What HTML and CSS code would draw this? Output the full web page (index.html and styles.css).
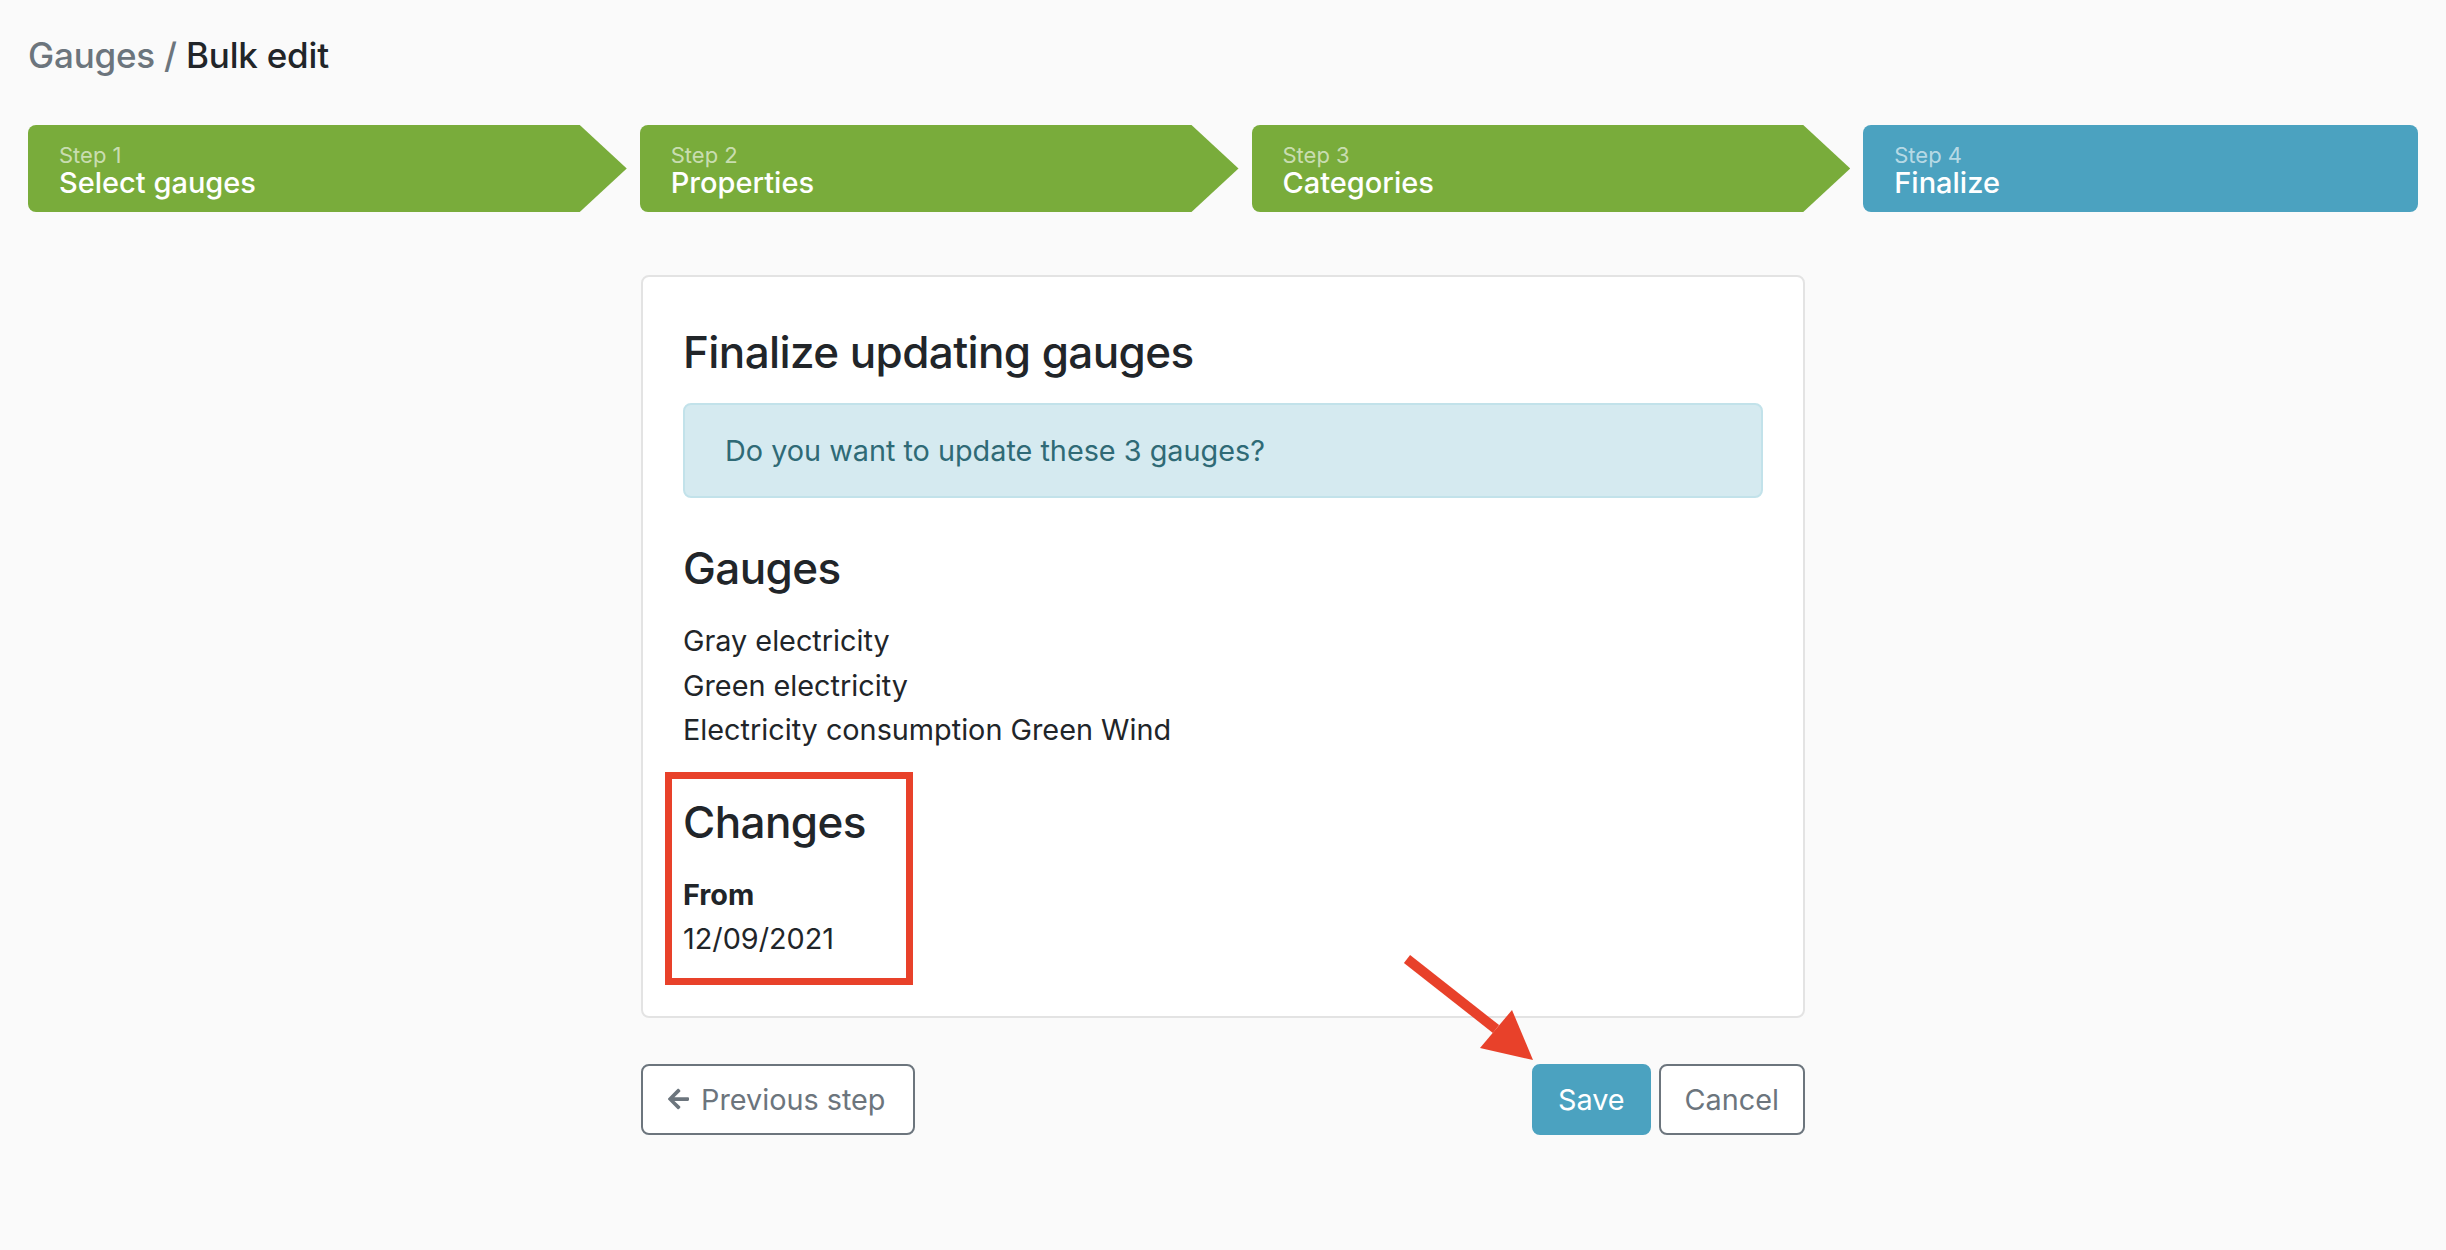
FILE: index.html
```html
<!DOCTYPE html>
<html lang="en">
<head>
<meta charset="utf-8">
<title>Gauges / Bulk edit</title>
<link rel="stylesheet" href="styles.css">
</head>
<body>
<div class="page">
  <h1 class="title"><span class="crumb">Gauges /</span> Bulk edit</h1>

  <div class="steps">
    <div class="step step-done step-arrow">
      <span class="step-num">Step 1</span>
      <span class="step-label">Select gauges</span>
    </div>
    <div class="step step-done step-arrow">
      <span class="step-num">Step 2</span>
      <span class="step-label">Properties</span>
    </div>
    <div class="step step-done step-arrow">
      <span class="step-num">Step 3</span>
      <span class="step-label">Categories</span>
    </div>
    <div class="step step-active">
      <span class="step-num">Step 4</span>
      <span class="step-label">Finalize</span>
    </div>
  </div>

  <div class="card">
    <h2 class="heading">Finalize updating gauges</h2>
    <div class="alert">Do you want to update these 3 gauges?</div>

    <h2 class="heading">Gauges</h2>
    <ul class="gauge-list">
      <li>Gray electricity</li>
      <li>Green electricity</li>
      <li>Electricity consumption Green Wind</li>
    </ul>

    <div class="changes">
      <span class="highlight-box"></span>
      <h2 class="heading">Changes</h2>
      <div class="field-label">From</div>
      <div class="field-value">12/09/2021</div>
    </div>
  </div>

  <div class="actions">
    <button class="btn btn-outline btn-back" type="button">
      <svg class="btn-icon" viewBox="0 0 448 512" aria-hidden="true"><path d="M257.5 445.1l-22.2 22.2c-9.4 9.4-24.6 9.4-33.9 0L7 273c-9.4-9.4-9.4-24.6 0-33.9L201.4 44.7c9.4-9.4 24.6-9.4 33.9 0l22.2 22.2c9.5 9.5 9.3 25-.4 34.3L136.6 216H424c13.3 0 24 10.7 24 24v32c0 13.3-10.7 24-24 24H136.6l120.5 114.8c9.8 9.3 10 24.8.4 34.3z"/></svg>
      Previous step
    </button>
    <div class="actions-right">
      <button class="btn btn-primary" type="button">Save</button>
      <button class="btn btn-outline" type="button">Cancel</button>
    </div>
    <svg class="pointer-arrow" viewBox="0 0 140 120" aria-hidden="true">
      <line x1="7" y1="11" x2="96" y2="81" stroke="#e8412a" stroke-width="10"/>
      <polygon points="80,100 112,62 133,112" fill="#e8412a"/>
    </svg>
  </div>
</div>
</body>
</html>
```

FILE: styles.css
```css
* {
  box-sizing: border-box;
}

html, body {
  margin: 0;
  padding: 0;
}

body {
  background: #fafafa;
  font-family: "Inter", "Noto Sans", "Liberation Sans", sans-serif;
  color: #212529;
  width: 2446px;
  height: 1250px;
  overflow: hidden;
}

.page {
  padding: 34px 28px 0;
}

.title {
  margin: 0;
  font-size: 35px;
  line-height: 42px;
  font-weight: 500;
  color: #212529;
  letter-spacing: -0.2px;
}

.crumb {
  color: #6c757d;
}

.steps {
  display: flex;
  gap: 13px;
  margin-top: 49px;
}

.step {
  height: 87px;
  padding: 18px 31px;
  display: flex;
  flex-direction: column;
  color: #fff;
}

.step-done {
  background: #79ac3b;
}

.step-arrow {
  width: 599px;
  border-radius: 8px 0 0 8px;
  clip-path: polygon(0 0, calc(100% - 47px) 0, 100% 50%, calc(100% - 47px) 100%, 0 100%);
}

.step-active {
  width: 555px;
  background: #4ba2c0;
  border-radius: 8px;
}

.step-num {
  font-size: 22px;
  line-height: 24px;
  color: rgba(255, 255, 255, 0.62);
}

.step-label {
  font-size: 29px;
  line-height: 32px;
  font-weight: 500;
}

.card {
  width: 1164px;
  margin: 63px auto 0;
  background: #fff;
  border: 2px solid #e3e3e3;
  border-radius: 8px;
  padding: 49px 40px 54px;
}

.heading {
  margin: 0 0 24px;
  font-size: 44px;
  line-height: 53px;
  font-weight: 500;
  color: #212529;
  letter-spacing: -0.6px;
}

.alert {
  background: #d5eaf0;
  border: 2px solid #c2e2ea;
  border-radius: 8px;
  padding: 24px 40px;
  font-size: 28.8px;
  line-height: 43px;
  color: #2f6a76;
  margin-bottom: 44px;
}

.gauge-list {
  list-style: none;
  margin: 0 0 43px;
  padding: 0;
  font-size: 28.8px;
  line-height: 44.5px;
}

.changes {
  position: relative;
  font-size: 28.8px;
  line-height: 44.5px;
}

.field-label {
  font-weight: 700;
}

.highlight-box {
  position: absolute;
  left: -18px;
  top: -24px;
  width: 248px;
  height: 213px;
  border: 7px solid #e8412a;
}

.actions {
  position: relative;
  width: 1164px;
  margin: 46px auto 0;
  display: flex;
  justify-content: space-between;
  align-items: center;
}

.actions-right {
  display: flex;
  gap: 8px;
}

.btn {
  height: 71px;
  padding: 0 24px;
  display: inline-flex;
  align-items: center;
  gap: 10px;
  font-family: inherit;
  font-size: 28.8px;
  border-radius: 8px;
  cursor: pointer;
}

.btn-back {
  padding: 0 27px 0 25px;
  gap: 12px;
}

.btn-outline {
  background: #fff;
  border: 2px solid #6c757d;
  color: #6c757d;
}

.btn-primary {
  background: #4ba2c0;
  border: 2px solid #4ba2c0;
  color: #fff;
}

.btn-icon {
  width: 21px;
  height: 24px;
  fill: #6c757d;
}

.pointer-arrow {
  position: absolute;
  left: 759px;
  top: -116px;
  width: 140px;
  height: 120px;
}
```
